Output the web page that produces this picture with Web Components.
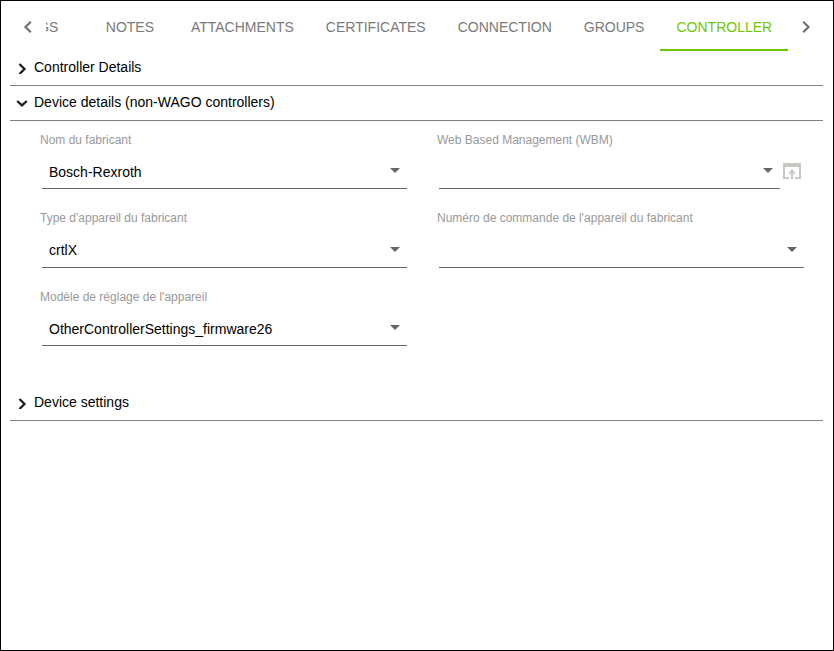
<!DOCTYPE html>
<html lang="fr"><head><meta charset="utf-8"><title>Controller</title>
<style>html,body{margin:0;padding:0;background:#fff}body{font-family:"Liberation Sans",Arial,sans-serif}</style>
</head><body>
<app-frame>
  <tab-bar>
    <tab-item>TAGS</tab-item><tab-item>NOTES</tab-item><tab-item>ATTACHMENTS</tab-item><tab-item>CERTIFICATES</tab-item><tab-item>CONNECTION</tab-item><tab-item>GROUPS</tab-item><tab-item active>CONTROLLER</tab-item>
  </tab-bar>
  <exp-panel title="Controller Details"></exp-panel>
  <exp-panel title="Device details (non-WAGO controllers)" open>
    <form-grid>
      <select-field label="Nom du fabricant" value="Bosch-Rexroth"></select-field>
      <select-field label="Web Based Management (WBM)" value="" action></select-field>
      <select-field label="Type d'appareil du fabricant" value="crtlX"></select-field>
      <select-field label="Numéro de commande de l'appareil du fabricant" value=""></select-field>
      <select-field label="Modèle de réglage de l'appareil" value="OtherControllerSettings_firmware26"></select-field>
    </form-grid>
  </exp-panel>
  <exp-panel title="Device settings"></exp-panel>
</app-frame>
<script>
const def=(name,html,setup)=>customElements.define(name,class extends HTMLElement{
  connectedCallback(){ if(this.shadowRoot)return; const r=this.attachShadow({mode:'open'}); r.innerHTML=html; setup&&setup(this,r); }
});
def('app-frame',`<style>:host{display:block;box-sizing:border-box;width:834px;height:651px;border:1px solid #000;background:#fff;overflow:hidden;color:#000;font:14px "Liberation Sans",Arial,sans-serif}</style><slot></slot>`);
def('tab-bar',`<style>
:host{display:flex;align-items:stretch;height:50px}
.nav{flex:none;display:flex;align-items:center;justify-content:center;padding-top:1px;box-sizing:border-box}
.nav.l{width:45px;padding-left:8px}
.view{flex:1;min-width:0;overflow:hidden}
.row{display:flex;height:100%;margin-left:-51.1px}
.nav.r{width:44px;padding-right:10px}
svg{width:10px;height:14px;fill:none;stroke:#707070;stroke-width:2.2}
</style>
<div class="nav l"><svg viewBox="0 0 10 14"><path d="M7.8 1.800 L2.500 7 L7.800 12.200"/></svg></div>
<div class="view"><div class="row"><slot></slot></div></div>
<div class="nav r"><svg viewBox="0 0 10 14"><path d="M2.200 1.800 L7.500 7 L2.200 12.200"/></svg></div>`);
def('tab-item',`<style>
:host{flex:none;box-sizing:border-box;min-width:90px;padding:4px 16px 0;display:flex;align-items:center;justify-content:center;font-size:14px;color:#7a7a7a;border-bottom:2px solid transparent}
:host([active]){color:#6ec800;border-bottom-color:#6ec800}
</style><slot></slot>`);
def('exp-panel',`<style>
:host{display:block;margin:0 10px 0 9px;color:#000}
.head{height:34px;display:flex;align-items:center;border-bottom:1px solid #808080;font-size:14px}
.ic{width:24px;display:flex;justify-content:center;flex:none}
.t{margin-top:-2px}
svg{width:12px;height:12px;fill:none;stroke:#1c1c1c;stroke-width:2.200}
.body{display:none}
:host([open]) .body{display:block}
</style>
<div class="head"><span class="ic"><svg viewBox="0 0 12 12"><path class="p" d="M3.500 2 L8.500 7 L3.500 12"/></svg></span><span class="t"></span></div>
<div class="body"><slot></slot></div>`,(h,r)=>{
  r.querySelector('.t').textContent=h.getAttribute('title');
  h.removeAttribute('title');
  if(h.hasAttribute('open')) r.querySelector('.p').setAttribute('d','M1.200 4 L6 8.400 L10.800 4');
});
def('form-grid',`<style>
:host{display:grid;grid-template-columns:397px 397px;padding:8px 0 21px 30px;grid-auto-rows:78.6px}
</style><slot></slot>`);
def('select-field',`<style>
:host{display:block;font-size:12px}
.lab{color:#999;height:21.3px;margin-top:-.3px;line-height:23px}
.row{display:flex;align-items:flex-start;margin-left:2px;width:365px}
.box{flex:1;height:39px;box-sizing:border-box;border-bottom:1px solid #666;display:flex;align-items:center;padding:5px 6px 0 7px;font-size:14px;color:#000;min-width:0}
.v{flex:1}
.arr{width:0;height:0;border-left:5px solid transparent;border-right:5px solid transparent;border-top:5px solid #666;margin:-1.500px 1px 0 0}
.act{flex:none;width:24px;height:39px;display:none;align-items:center;justify-content:flex-end;padding:3px 2px 0 0;box-sizing:border-box}
:host([action]) .act{display:flex}
.act svg{width:20px;height:20px}
</style>
<div class="lab"></div>
<div class="row"><div class="box"><span class="v"></span><span class="arr"></span></div>
<div class="act"><svg viewBox="0 0 20 20"><path fill="#c9c9c4" d="M1 2h18v16h-6v-2h4V6H3v10h4v2H1z"/><path fill="#c9c9c4" d="M10 8l4 4.500h-3V18H9v-5.500H6z"/></svg></div></div>`,(h,r)=>{
  r.querySelector('.lab').textContent=h.getAttribute('label');
  r.querySelector('.v').textContent=h.getAttribute('value');
});
</script>
</body></html>
